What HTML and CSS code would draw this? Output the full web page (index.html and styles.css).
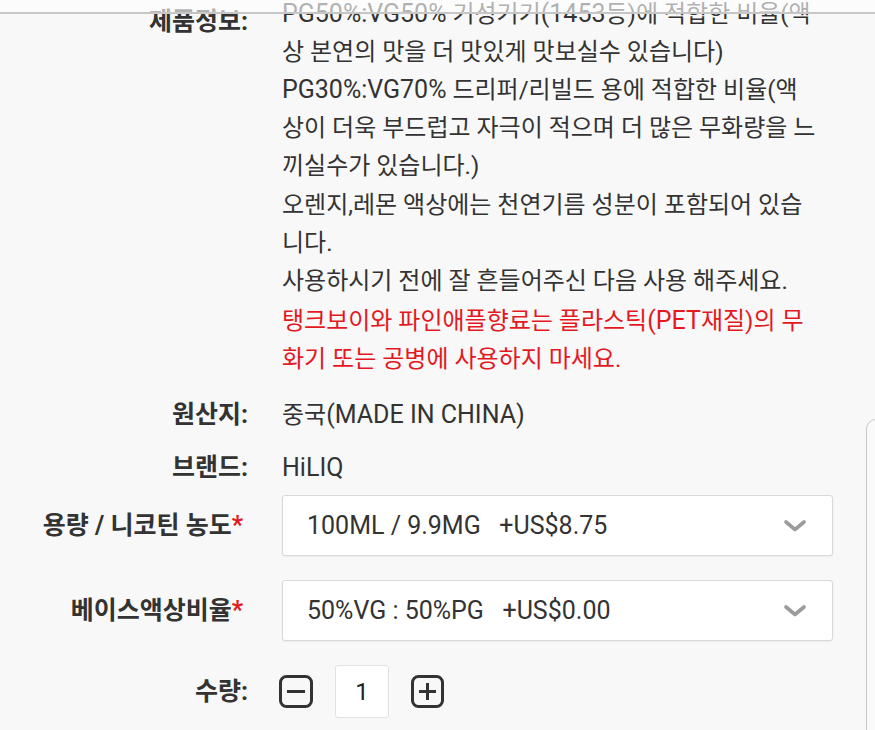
FILE: index.html
```html
<!DOCTYPE html>
<html lang="ko">
<head>
<meta charset="utf-8">
<title>제품정보</title>
<link rel="stylesheet" href="styles.css">
</head>
<body>
<div class="topbar"></div>
<div class="side-card"></div>
<main class="product">
  <section class="row info">
    <div class="label">제품정보:</div>
    <div class="value">
      <p class="desc"><span class="en">PG50%:VG50%</span> 기성기기<span class="en">(1453</span>등)에 적합한 비율(액<br>상 본연의 맛을 더 맛있게 맛보실수 있습니다)<br><span class="en">PG30%:VG70%</span> 드리퍼/리빌드 용에 적합한 비율(액<br>상이 더욱 부드럽고 자극이 적으며 더 많은 무화량을 느<br>끼실수가 있습니다.)<br>오렌지,레몬 액상에는 천연기름 성분이 포함되어 있습<br>니다.<br>사용하시기 전에 잘 흔들어주신 다음 사용 해주세요.</p>
      <p class="desc warn">탱크보이와 파인애플향료는 플라스틱<span class="en">(PET</span>재질)의 무<br>화기 또는 공병에 사용하지 마세요.</p>
    </div>
  </section>
  <section class="row origin">
    <div class="label">원산지:</div>
    <div class="value">중국<span class="en">(MADE IN CHINA)</span></div>
  </section>
  <section class="row brand">
    <div class="label">브랜드:</div>
    <div class="value"><span class="en">HiLIQ</span></div>
  </section>
  <section class="row opt opt-first">
    <div class="label req">용량 / 니코틴 농도<span class="star">*</span></div>
    <div class="select">
      <span>100ML / 9.9MG&nbsp;&nbsp;&nbsp;+US$8.75</span>
      <svg class="chev" width="24" height="14" viewBox="0 0 24 14"><path d="M3 3 L12 10.5 L21 3" fill="none" stroke="#9b9b9b" stroke-width="3.6" stroke-linecap="round" stroke-linejoin="round"/></svg>
    </div>
  </section>
  <section class="row opt">
    <div class="label req">베이스액상비율<span class="star">*</span></div>
    <div class="select">
      <span>50%VG : 50%PG&nbsp;&nbsp;&nbsp;+US$0.00</span>
      <svg class="chev" width="24" height="14" viewBox="0 0 24 14"><path d="M3 3 L12 10.5 L21 3" fill="none" stroke="#9b9b9b" stroke-width="3.6" stroke-linecap="round" stroke-linejoin="round"/></svg>
    </div>
  </section>
  <section class="row qty-row">
    <div class="label">수량:</div>
    <div class="qty">
      <svg class="qbtn minus" width="34" height="33" viewBox="0 0 34 33"><rect x="1.5" y="1.5" width="31" height="30" rx="6" fill="none" stroke="#333" stroke-width="3"/><line x1="8" y1="16.5" x2="26" y2="16.5" stroke="#333" stroke-width="3"/></svg>
      <div class="qinput">1</div>
      <svg class="qbtn plus" width="33" height="33" viewBox="0 0 33 33"><rect x="1.5" y="1.5" width="30" height="30" rx="6" fill="none" stroke="#333" stroke-width="3"/><line x1="8" y1="16.5" x2="25" y2="16.5" stroke="#333" stroke-width="3"/><line x1="16.5" y1="8" x2="16.5" y2="25" stroke="#333" stroke-width="3"/></svg>
    </div>
  </section>
</main>
</body>
</html>
```

FILE: styles.css
```css
html, body {
  margin: 0;
  padding: 0;
}
body {
  background: #f8f8f8;
  font-family: Roboto, "Noto Sans CJK KR", sans-serif;
  color: #333;
  overflow: hidden;
  width: 875px;
  height: 730px;
}
.topbar {
  position: fixed;
  top: 0;
  left: 0;
  right: 0;
  height: 12px;
  background: rgba(255, 255, 255, 0.62);
  border-bottom: 2px solid #c6c6c6;
  z-index: 5;
}
.side-card {
  position: fixed;
  left: 866px;
  top: 419px;
  width: 40px;
  height: 400px;
  border: 1.5px solid #c8c8c8;
  border-radius: 10px;
  background: #fafafa;
}
.product {
  display: flex;
  flex-direction: column;
  margin-top: -5.5px;
}
.row {
  display: grid;
  grid-template-columns: 248px 1fr;
  column-gap: 34px;
  align-items: center;
}
.row.info {
  align-items: start;
}
.label {
  text-align: right;
  font-weight: 700;
  font-size: 25px;
  line-height: 38px;
  white-space: nowrap;
  color: #333;
}
.info .label {
  padding-top: 8px;
}
.label.req {
  padding-right: 5px;
}
.star {
  color: #e3191f;
}
.value {
  font-size: 24px;
  line-height: 38px;
  white-space: nowrap;
}
.desc {
  margin: 0;
  line-height: 38.2px;
}
.en {
  font-size: 25px;
}
.warn {
  color: #e3191f;
  margin-top: 2px;
}
.origin {
  margin-top: 17px;
}
.brand {
  margin-top: 15px;
}
.opt {
  margin-top: 24px;
}
.opt-first {
  margin-top: 8.5px;
}
.select {
  box-sizing: border-box;
  width: 551px;
  height: 61px;
  background: #fff;
  border: 1px solid #d8d8d8;
  border-radius: 3px;
  box-shadow: 0 1px 2px rgba(0, 0, 0, 0.05);
  display: flex;
  align-items: center;
  justify-content: space-between;
  padding: 0 25px 0 24px;
  font-size: 25px;
  color: #333;
  white-space: nowrap;
}
.chev {
  display: block;
}
.qty-row {
  margin-top: 24px;
}
.qty {
  display: flex;
  align-items: center;
  gap: 22px;
  margin-left: -3px;
}
.qbtn {
  display: block;
}
.qinput {
  box-sizing: border-box;
  width: 54px;
  height: 53px;
  background: #fff;
  border: 1px solid #e2e2e2;
  border-radius: 3px;
  display: flex;
  align-items: center;
  justify-content: center;
  font-size: 24px;
  color: #222;
}
```
